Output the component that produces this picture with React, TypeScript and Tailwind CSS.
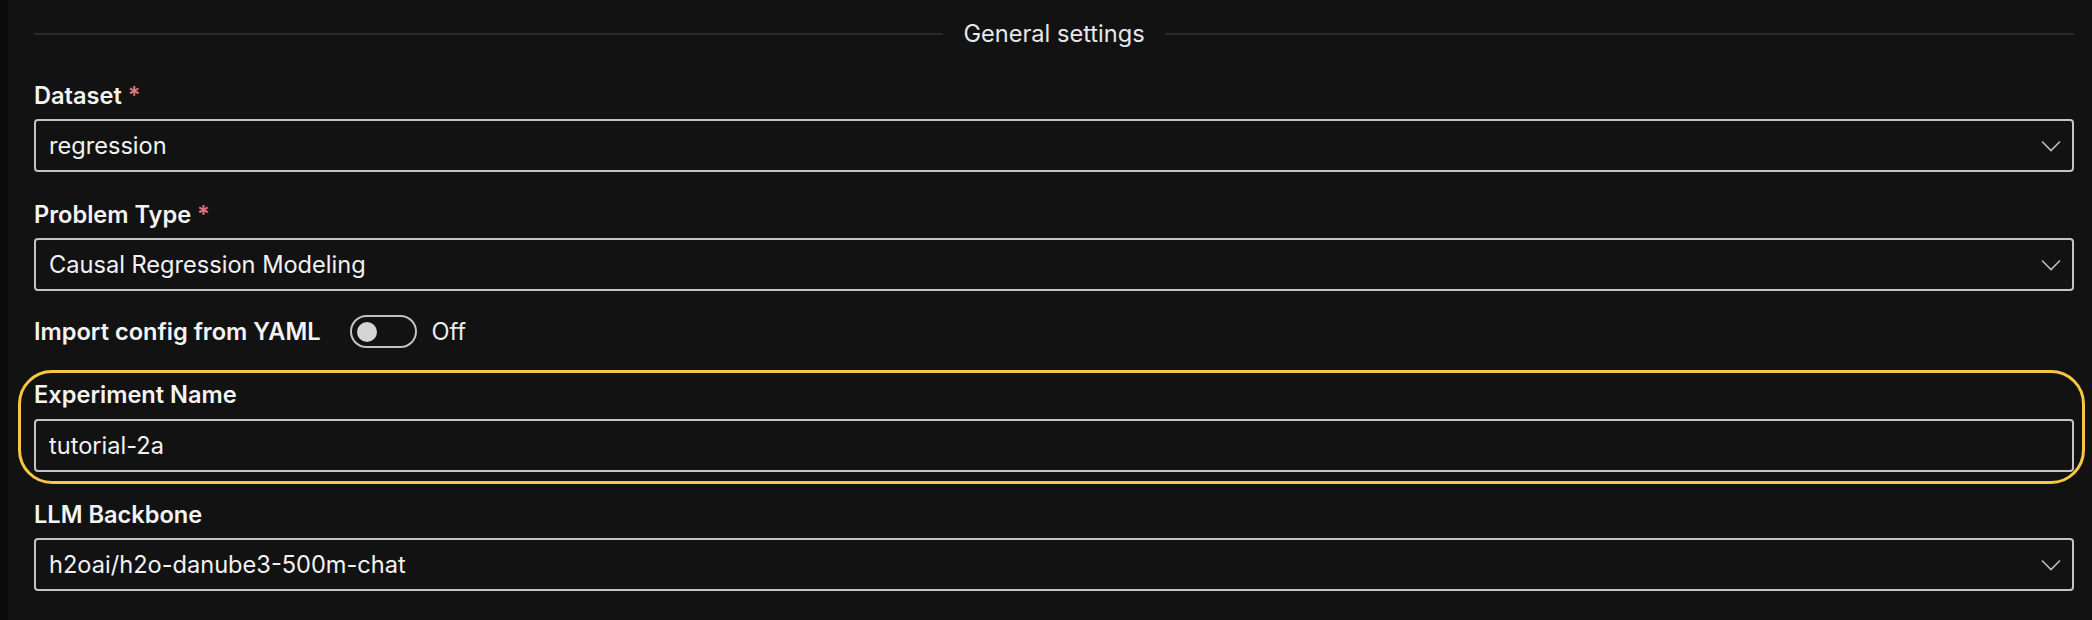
import { useState } from 'react';

function Chevron() {
  return (
    <svg width="20" height="12" viewBox="0 0 20 12" fill="none" className="shrink-0">
      <polyline points="1,1.5 10,10.5 19,1.5" stroke="#bdbdbd" strokeWidth="1.6" />
    </svg>
  );
}

function Label({ text, required }: { text: string; required?: boolean }) {
  return (
    <div className="h-[28px] text-[23.6px] leading-[28px] font-semibold text-[#f4f4f4]">
      {text}
      {required && <span className="text-[#e5737a]"> *</span>}
    </div>
  );
}

function SelectField({ label, value, required }: { label: string; value: string; required?: boolean }) {
  return (
    <div className="flex flex-col">
      <Label text={label} required={required} />
      <div className="mt-[9px] flex h-[53px] items-center justify-between rounded-[4px] border-2 border-[#c4c4c4] pl-[13px] pr-[11px]">
        <span className="text-[23.6px] text-[#f2f2f2]">{value}</span>
        <Chevron />
      </div>
    </div>
  );
}

export default function App() {
  const [yaml, setYaml] = useState(false);

  return (
    <div
      className="flex h-[620px] w-[2092px] overflow-hidden bg-[#121212]"
      style={{ fontFamily: 'Inter, "Noto Sans", sans-serif' }}
    >
      <div className="w-[8px] shrink-0 bg-[#0b0b0b]" />

      <div className="flex flex-1 flex-col pl-[26px] pr-[18px] pt-[20px]">
        <div className="flex h-[28px] items-center gap-[20px]">
          <div className="h-[2px] flex-1 bg-[#2a2a2a]" />
          <span className="text-[23.6px] leading-[28px] text-[#e8e8e8]">General settings</span>
          <div className="h-[2px] flex-1 bg-[#2a2a2a]" />
        </div>

        <div className="mt-[34px]">
          <SelectField label="Dataset" value="regression" required />
        </div>

        <div className="mt-[29px]">
          <SelectField label="Problem Type" value="Causal Regression Modeling" required />
        </div>

        <div className="mt-[24px] flex h-[33px] items-center">
          <span className="text-[23.6px] leading-[28px] font-semibold text-[#f4f4f4]">Import config from YAML</span>
          <button
            type="button"
            onClick={() => setYaml(!yaml)}
            className="ml-[29px] flex h-[33px] w-[67px] items-center rounded-full border-2 border-[#c2c2c2] px-[5px]"
          >
            <span className="h-[20px] w-[20px] rounded-full bg-[#d4d4d4]" />
          </button>
          <span className="ml-[15px] text-[23.6px] text-[#ececec]">Off</span>
        </div>

        <div className="relative mt-[33px] flex flex-col">
          <div className="pointer-events-none absolute -left-[16px] -right-[11px] -top-[11px] -bottom-[12px] rounded-[34px] border-[3px] border-[#f6c744]" />
          <Label text="Experiment Name" />
          <div className="mt-[10px] flex h-[53px] items-center rounded-[4px] border-2 border-[#c4c4c4] pl-[13px]">
            <span className="text-[23.6px] text-[#f2f2f2]">tutorial-2a</span>
          </div>
        </div>

        <div className="mt-[29px]">
          <SelectField label="LLM Backbone" value="h2oai/h2o-danube3-500m-chat" />
        </div>
      </div>
    </div>
  );
}
